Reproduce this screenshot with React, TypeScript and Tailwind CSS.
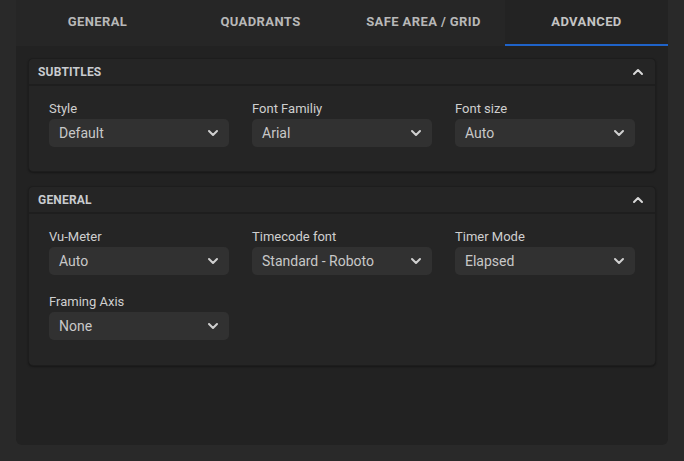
import React from 'react';

const tabs = ['General', 'Quadrants', 'Safe area / Grid', 'Advanced'];

const Chevron = ({ up = false, className = '' }: { up?: boolean; className?: string }) => (
  <svg viewBox="0 0 24 24" className={className} fill="none" stroke="currentColor" strokeWidth={3} strokeLinecap="round" strokeLinejoin="round">
    <path d={up ? 'M6 15l6-6 6 6' : 'M6 9l6 6 6-6'} />
  </svg>
);

const Select = ({ label, value }: { label: string; value: string }) => (
  <div className="flex flex-col">
    <span className="text-[13px] leading-[16px] text-[#cfcfcf] mb-[2px]">{label}</span>
    <div className="h-[28px] rounded-[5px] bg-[#313131] flex items-center justify-between pl-[10px] pr-[8px]">
      <span className="text-[14px] text-[#c8c8c8]">{value}</span>
      <Chevron className="w-[16px] h-[16px] text-[#d0d0d0]" />
    </div>
  </div>
);

const Section = ({ title, children, pb }: { title: string; children: React.ReactNode; pb: string }) => (
  <div className="rounded-[5px] bg-[#252525] border border-[#1d1d1d] shadow-[0_1px_2px_rgba(0,0,0,0.35)]">
    <div className="h-[27px] flex items-center justify-between pl-[9px] pr-[9px] border-b-2 border-[#1e1e1e]">
      <span className="text-[12px] font-bold text-[#c9ccd0] tracking-[0.2px]">{title.toUpperCase()}</span>
      <Chevron up className="w-[16px] h-[16px] text-[#d8d8d8]" />
    </div>
    <div className={`grid grid-cols-3 gap-x-[23px] gap-y-[19px] px-[20px] pt-[15px] ${pb}`}>{children}</div>
  </div>
);

export default function App() {
  return (
    <div className="w-[684px] h-[461px] bg-[#292929] px-[16px]" style={{ fontFamily: 'Roboto, "Liberation Sans", sans-serif' }}>
      <div className="h-[445px] flex flex-col rounded-b-[6px] bg-[#222222] overflow-hidden">
        <div className="h-[46px] flex bg-[#262626]">
          {tabs.map((t, i) => (
            <div
              key={t}
              className={`flex-1 flex items-center justify-center text-[13px] font-bold tracking-[0.4px] uppercase ${
                i === 3 ? 'bg-[#232323] text-[#c4c4c4] border-b-2 border-[#1f63c9]' : 'text-[#b8b8b8] border-b-2 border-transparent'
              }`}
            >
              {t}
            </div>
          ))}
        </div>
        <div className="flex flex-col gap-[14px] px-[12px] pt-[12px]">
          <Section title="Subtitles" pb="pb-[24px]">
            <Select label="Style" value="Default" />
            <Select label="Font Familiy" value="Arial" />
            <Select label="Font size" value="Auto" />
          </Section>
          <Section title="General" pb="pb-[25px]">
            <Select label="Vu-Meter" value="Auto" />
            <Select label="Timecode font" value="Standard - Roboto" />
            <Select label="Timer Mode" value="Elapsed" />
            <Select label="Framing Axis" value="None" />
          </Section>
        </div>
      </div>
    </div>
  );
}
